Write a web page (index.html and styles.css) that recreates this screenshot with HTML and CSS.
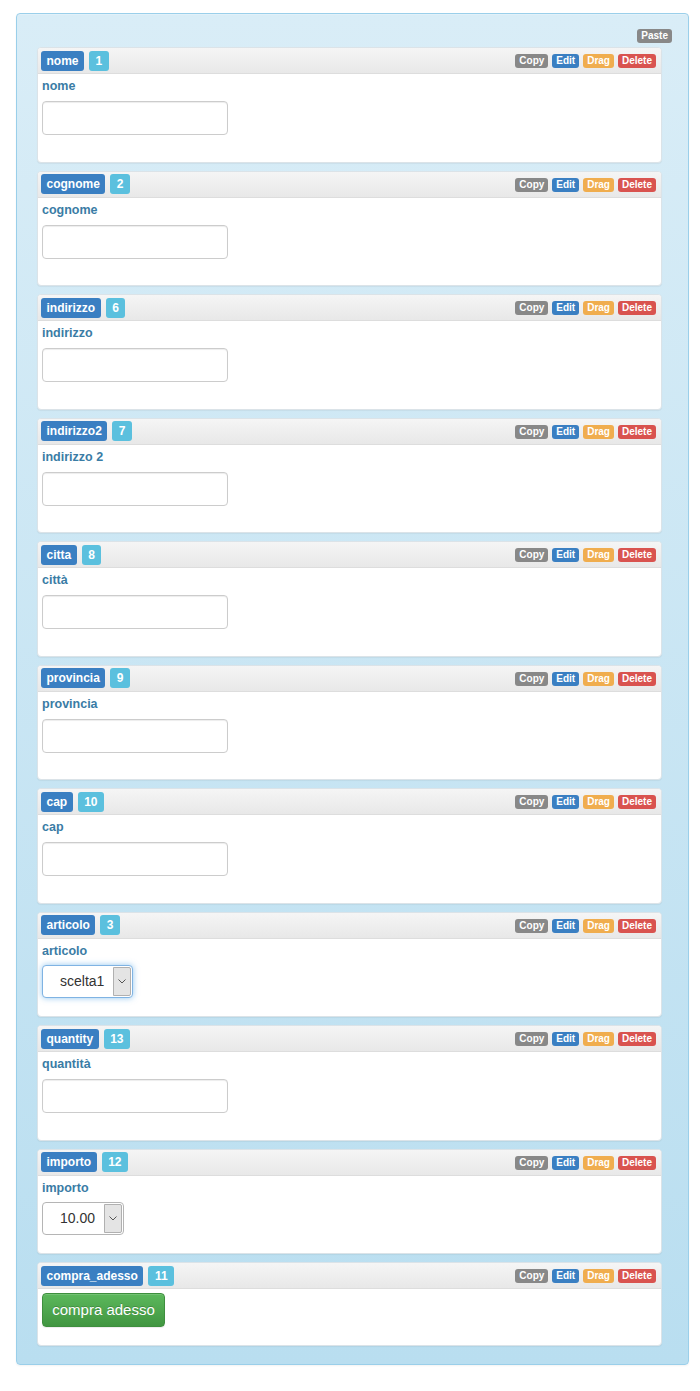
FILE: index.html
```html
<!DOCTYPE html>
<html lang="it">
<head>
<meta charset="utf-8">
<title>Form builder</title>
<link rel="stylesheet" href="styles.css">
</head>
<body>
<div class="form-area">
  <div class="paste-row"><span class="tag tag-gray">Paste</span></div>
  <div class="fields">

    <section class="field field-text">
      <header class="field-head">
        <div class="ids"><span class="name-tag">nome</span><span class="num-tag">1</span></div>
        <div class="actions"><span class="tag tag-gray">Copy</span><span class="tag tag-blue">Edit</span><span class="tag tag-orange">Drag</span><span class="tag tag-red">Delete</span></div>
      </header>
      <div class="field-body">
        <label class="field-label">nome</label>
        <input class="text-input" type="text">
      </div>
    </section>

    <section class="field field-text">
      <header class="field-head">
        <div class="ids"><span class="name-tag">cognome</span><span class="num-tag">2</span></div>
        <div class="actions"><span class="tag tag-gray">Copy</span><span class="tag tag-blue">Edit</span><span class="tag tag-orange">Drag</span><span class="tag tag-red">Delete</span></div>
      </header>
      <div class="field-body">
        <label class="field-label">cognome</label>
        <input class="text-input" type="text">
      </div>
    </section>

    <section class="field field-text">
      <header class="field-head">
        <div class="ids"><span class="name-tag">indirizzo</span><span class="num-tag">6</span></div>
        <div class="actions"><span class="tag tag-gray">Copy</span><span class="tag tag-blue">Edit</span><span class="tag tag-orange">Drag</span><span class="tag tag-red">Delete</span></div>
      </header>
      <div class="field-body">
        <label class="field-label">indirizzo</label>
        <input class="text-input" type="text">
      </div>
    </section>

    <section class="field field-text">
      <header class="field-head">
        <div class="ids"><span class="name-tag">indirizzo2</span><span class="num-tag">7</span></div>
        <div class="actions"><span class="tag tag-gray">Copy</span><span class="tag tag-blue">Edit</span><span class="tag tag-orange">Drag</span><span class="tag tag-red">Delete</span></div>
      </header>
      <div class="field-body">
        <label class="field-label">indirizzo 2</label>
        <input class="text-input" type="text">
      </div>
    </section>

    <section class="field field-text">
      <header class="field-head">
        <div class="ids"><span class="name-tag">citta</span><span class="num-tag">8</span></div>
        <div class="actions"><span class="tag tag-gray">Copy</span><span class="tag tag-blue">Edit</span><span class="tag tag-orange">Drag</span><span class="tag tag-red">Delete</span></div>
      </header>
      <div class="field-body">
        <label class="field-label">città</label>
        <input class="text-input" type="text">
      </div>
    </section>

    <section class="field field-text">
      <header class="field-head">
        <div class="ids"><span class="name-tag">provincia</span><span class="num-tag">9</span></div>
        <div class="actions"><span class="tag tag-gray">Copy</span><span class="tag tag-blue">Edit</span><span class="tag tag-orange">Drag</span><span class="tag tag-red">Delete</span></div>
      </header>
      <div class="field-body">
        <label class="field-label">provincia</label>
        <input class="text-input" type="text">
      </div>
    </section>

    <section class="field field-text">
      <header class="field-head">
        <div class="ids"><span class="name-tag">cap</span><span class="num-tag">10</span></div>
        <div class="actions"><span class="tag tag-gray">Copy</span><span class="tag tag-blue">Edit</span><span class="tag tag-orange">Drag</span><span class="tag tag-red">Delete</span></div>
      </header>
      <div class="field-body">
        <label class="field-label">cap</label>
        <input class="text-input" type="text">
      </div>
    </section>

    <section class="field field-select">
      <header class="field-head">
        <div class="ids"><span class="name-tag">articolo</span><span class="num-tag">3</span></div>
        <div class="actions"><span class="tag tag-gray">Copy</span><span class="tag tag-blue">Edit</span><span class="tag tag-orange">Drag</span><span class="tag tag-red">Delete</span></div>
      </header>
      <div class="field-body">
        <label class="field-label">articolo</label>
        <div class="select select-focus select-articolo">
          <span class="select-text">scelta1</span>
          <span class="select-arrow"><svg width="8" height="5" viewBox="0 0 8 5"><polyline points="0.5,0.5 4,4 7.5,0.5" fill="none" stroke="#555" stroke-width="1"/></svg></span>
        </div>
      </div>
    </section>

    <section class="field field-text">
      <header class="field-head">
        <div class="ids"><span class="name-tag">quantity</span><span class="num-tag">13</span></div>
        <div class="actions"><span class="tag tag-gray">Copy</span><span class="tag tag-blue">Edit</span><span class="tag tag-orange">Drag</span><span class="tag tag-red">Delete</span></div>
      </header>
      <div class="field-body">
        <label class="field-label">quantità</label>
        <input class="text-input" type="text">
      </div>
    </section>

    <section class="field field-select">
      <header class="field-head">
        <div class="ids"><span class="name-tag">importo</span><span class="num-tag">12</span></div>
        <div class="actions"><span class="tag tag-gray">Copy</span><span class="tag tag-blue">Edit</span><span class="tag tag-orange">Drag</span><span class="tag tag-red">Delete</span></div>
      </header>
      <div class="field-body">
        <label class="field-label">importo</label>
        <div class="select select-importo">
          <span class="select-text">10.00</span>
          <span class="select-arrow"><svg width="8" height="5" viewBox="0 0 8 5"><polyline points="0.5,0.5 4,4 7.5,0.5" fill="none" stroke="#555" stroke-width="1"/></svg></span>
        </div>
      </div>
    </section>

    <section class="field field-button">
      <header class="field-head">
        <div class="ids"><span class="name-tag">compra_adesso</span><span class="num-tag">11</span></div>
        <div class="actions"><span class="tag tag-gray">Copy</span><span class="tag tag-blue">Edit</span><span class="tag tag-orange">Drag</span><span class="tag tag-red">Delete</span></div>
      </header>
      <div class="field-body">
        <button class="buy-btn" type="button">compra adesso</button>
      </div>
    </section>

  </div>
</div>
</body>
</html>
```

FILE: styles.css
```css
body {
  margin: 0;
  background: #fff;
  font-family: "Liberation Sans", Arial, sans-serif;
}

.form-area {
  margin: 13px 11px 26px 16px;
  padding: 15px 16px 18px 20px;
  border: 1px solid #9acfea;
  border-radius: 4px;
  background: linear-gradient(to bottom, #d9edf7 0%, #b9def0 100%);
  box-shadow: inset 0 1px 0 rgba(255, 255, 255, .25), 0 1px 2px rgba(0, 0, 0, .05);
}

.paste-row {
  display: flex;
  justify-content: flex-end;
  margin-bottom: 4px;
}

.fields {
  display: flex;
  flex-direction: column;
  gap: 8px;
  margin-right: 10px;
}

.field {
  background: #fff;
  border: 1px solid #dbe3e8;
  border-radius: 4px;
  box-shadow: 0 1px 1px rgba(0, 0, 0, .05);
  overflow: hidden;
}

.field-head {
  height: 25px;
  display: flex;
  align-items: center;
  justify-content: space-between;
  padding: 0 5px 0 3px;
  background: linear-gradient(to bottom, #f5f5f5 0%, #e8e8e8 100%);
  border-bottom: 1px solid #dddddd;
}

.ids {
  display: flex;
  gap: 5px;
}

.name-tag,
.num-tag {
  height: 20px;
  line-height: 20px;
  font-size: 12px;
  font-weight: bold;
  color: #fff;
  border-radius: 3px;
}

.name-tag {
  padding: 0 5.5px;
  background: #3a7fc2;
}

.num-tag {
  padding: 0 6.5px;
  background: #5bc0de;
}

.actions {
  display: flex;
  gap: 4px;
  margin-top: 1px;
}

.tag {
  display: inline-block;
  height: 14px;
  line-height: 14px;
  padding: 0 4px;
  font-size: 10px;
  font-weight: bold;
  color: #fff;
  border-radius: 3px;
}

.tag-gray { background: #888888; }
.tag-blue { background: #3a7fc2; }
.tag-orange { background: #f0ad4e; }
.tag-red { background: #d9534f; }

.field-body {
  padding: 4px 4px 26.5px;
}

.field-label {
  display: block;
  font-size: 12.5px;
  line-height: 17px;
  font-weight: bold;
  color: #3a7ca5;
  margin-bottom: 6px;
}

.text-input {
  display: block;
  box-sizing: border-box;
  width: 186px;
  height: 34px;
  margin: 0;
  padding: 6px 12px;
  border: 1px solid #cccccc;
  border-radius: 4px;
  background: #fff;
  box-shadow: inset 0 1px 1px rgba(0, 0, 0, .075);
}

.field-select .field-body {
  padding-bottom: 18.5px;
}

.field-select .field-label {
  margin-bottom: 5px;
}

.select {
  display: flex;
  box-sizing: border-box;
  height: 33px;
  border: 1px solid #b5b5b5;
  border-radius: 4px;
  background: #fff;
  overflow: hidden;
}

.select-focus {
  border-color: #7fb3e3;
  box-shadow: 0 0 6px rgba(102, 175, 233, .7);
}

.select-articolo { width: 91px; }
.select-importo { width: 82px; }

.select-text {
  flex: 1;
  padding-left: 17px;
  font-size: 14px;
  line-height: 31px;
  color: #333;
}

.select-arrow {
  width: 16px;
  margin: 1px 1px 1px 0;
  display: flex;
  align-items: center;
  justify-content: center;
  background: #e4e4e4;
  border: 1px solid #b0b0b0;
  border-radius: 0 2px 2px 0;
}

.field-button .field-body {
  padding: 4px 4px 18px;
}

.buy-btn {
  display: block;
  box-sizing: border-box;
  width: 123px;
  height: 34px;
  margin: 0;
  padding: 0;
  font-family: inherit;
  font-size: 15px;
  line-height: 32px;
  color: #fff;
  background: linear-gradient(to bottom, #5cb85c 0%, #419641 100%);
  border: 1px solid #3e8f3e;
  border-radius: 4px;
  text-shadow: 0 -1px 0 rgba(0, 0, 0, .2);
  box-shadow: inset 0 1px 0 rgba(255, 255, 255, .15), 0 1px 1px rgba(0, 0, 0, .075);
}
```
